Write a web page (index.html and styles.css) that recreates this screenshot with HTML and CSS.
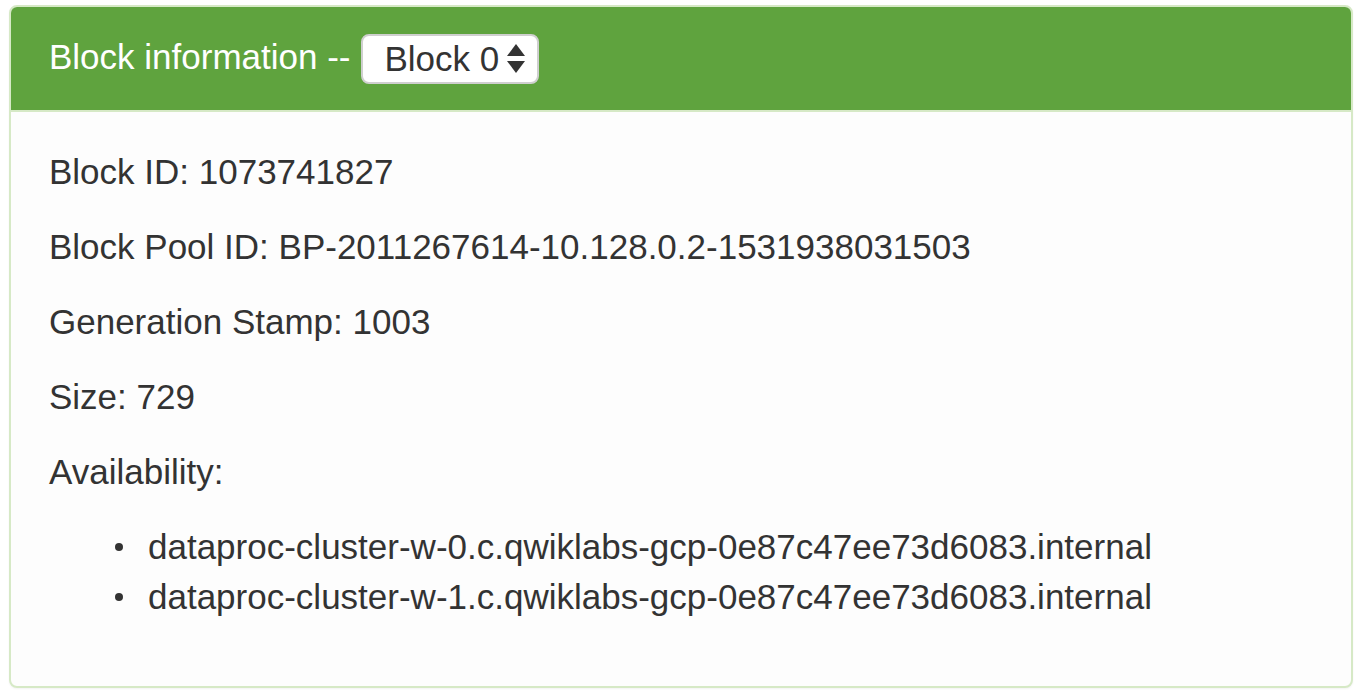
FILE: index.html
```html
<!DOCTYPE html>
<html>
<head>
<meta charset="utf-8">
<link rel="stylesheet" href="styles.css">
</head>
<body>
<div class="panel">
  <div class="panel-heading">
    <span class="title">Block information --</span>
    <div class="select">
      <span>Block 0</span>
      <svg class="arrows" width="18" height="30" viewBox="0 0 18 30">
        <polygon points="9,0 18,12 0,12" fill="#333"/>
        <polygon points="0,17 18,17 9,29" fill="#333"/>
      </svg>
    </div>
  </div>
  <div class="panel-body">
    <p>Block ID: 1073741827</p>
    <p>Block Pool ID: BP-2011267614-10.128.0.2-1531938031503</p>
    <p>Generation Stamp: 1003</p>
    <p>Size: 729</p>
    <p>Availability:</p>
    <ul>
      <li>dataproc-cluster-w-0.c.qwiklabs-gcp-0e87c47ee73d6083.internal</li>
      <li>dataproc-cluster-w-1.c.qwiklabs-gcp-0e87c47ee73d6083.internal</li>
    </ul>
  </div>
</div>
</body>
</html>
```
FILE: styles.css
```css
html, body {
  margin: 0;
  padding: 0;
  background: #fff;
}
body {
  font-family: "Liberation Sans", Arial, sans-serif;
  font-size: 35px;
  line-height: 50px;
  color: #333;
  padding: 5px 11px 9px 9px;
}
.panel {
  border: 2px solid #d6e9c6;
  border-radius: 8px;
  overflow: hidden;
  background: #fdfdfd;
  box-shadow: 0 1px 2px rgba(0,0,0,0.05);
}
.panel-heading {
  background: #5fa33e;
  color: #fff;
  height: 105px;
  box-sizing: border-box;
  padding: 0 38px 2px 38px;
  display: flex;
  align-items: center;
  gap: 11px;
  border-bottom: 2px solid #d6e9c6;
}
.title {
  position: relative;
  top: -1px;
}
.select {
  display: flex;
  align-items: center;
  gap: 8px;
  height: 50px;
  box-sizing: border-box;
  padding: 0 12px 0 21px;
  background: #fff;
  color: #333;
  border: 2px solid #cfcfcf;
  border-radius: 8px;
  position: relative;
  top: 1px;
}
.arrows {
  display: block;
}
.panel-body {
  padding: 35px 38px 39px 38px;
}
.panel-body p {
  margin: 0 0 25px 0;
}
.panel-body ul {
  margin: 0 0 25px 0;
  padding-left: 66px;
  list-style: none;
}
.panel-body li {
  display: flex;
  align-items: center;
}
.panel-body li::before {
  content: "";
  width: 8px;
  height: 8px;
  border-radius: 50%;
  background: #333;
  margin-right: 25px;
  flex: none;
}
```
